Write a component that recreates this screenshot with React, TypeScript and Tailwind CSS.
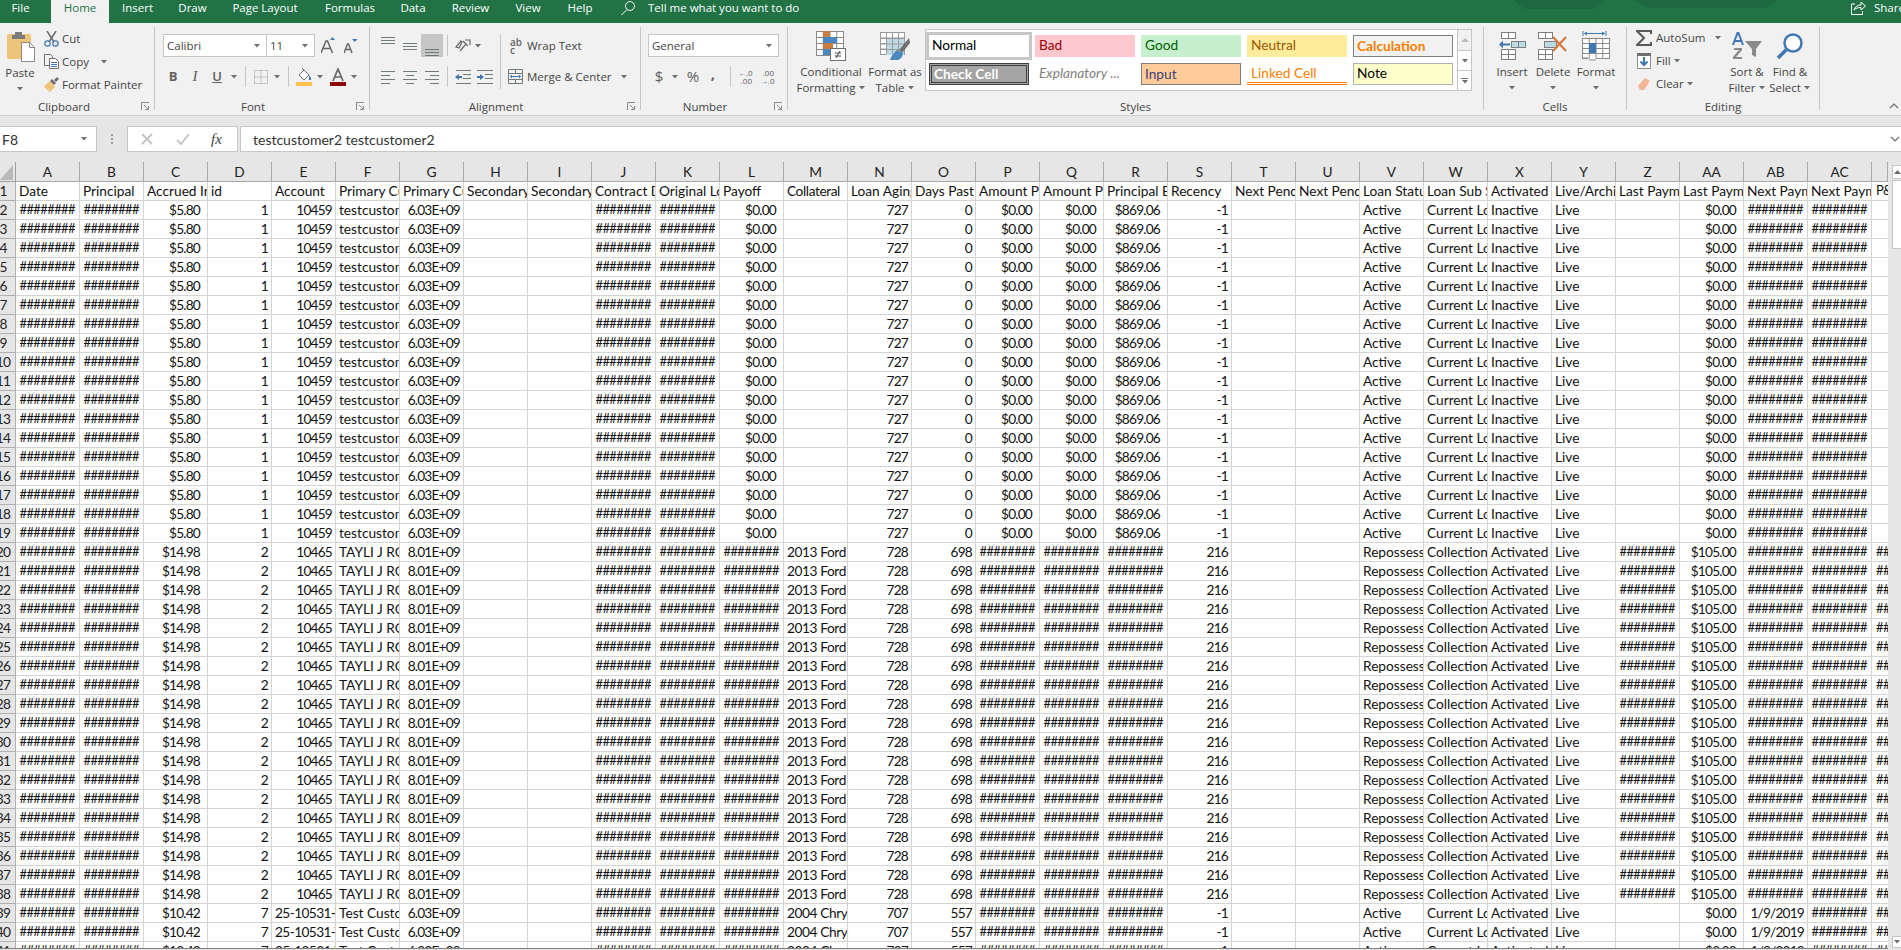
import type { ReactNode } from "react";

const COLS = ["A","B","C","D","E","F","G","H","I","J","K","L","M","N","O","P","Q","R","S","T","U","V","W","X","Y","Z","AA","AB","AC",""];

const HEADERS = ["Date","Principal","Accrued Interest","id","Account","Primary Customer","Primary Customer","Secondary Customer","Secondary Customer","Contract Date","Original Loan","Payoff","Collateral","Loan Aging","Days Past Due","Amount Past","Amount Past","Principal Balance","Recency","Next Pending","Next Pending","Loan Status","Loan Sub Status","Activated","Live/Archive","Last Payment","Last Payment","Next Payment","Next Payment","P&I"];

const H = "########";

// r = number, m = money, h = hashes, l = text
type Kind = "r" | "m" | "h" | "l";
const KINDS: Kind[] = ["h","h","m","r","r","l","r","l","l","h","h","m","l","r","r","m","m","m","r","l","l","l","l","l","l","h","m","h","h","l"];

function rowValues(n: number): string[] {
  if (n <= 19) return [H,H,"$5.80","1","10459","testcustomer2 testcustomer2","6.03E+09","","",H,H,"$0.00","","727","0","$0.00","$0.00","$869.06","-1","","","Active","Current Loan","Inactive","Live","","$0.00",H,H,""];
  if (n <= 38) return [H,H,"$14.98","2","10465","TAYLI J ROGERS","8.01E+09","","",H,H,H,"2013 Ford","728","698",H,H,H,"216","","","Repossessed","Collections","Activated","Live",H,"$105.00",H,H,H];
  return [H,H,"$10.42","7","25-10531-T","Test Customer","6.03E+09","","",H,H,H,"2004 Chrysler","707","557",H,H,H,"-1","","","Active","Current Loan","Activated","Live","","$0.00","1/9/2019",H,H];
}

const rows = Array.from({ length: 40 }, (_, i) => i + 2);

function cellClass(kind: Kind, value: string, col: number) {
  const base = "overflow-hidden whitespace-nowrap border-r border-b border-[#d4d4d4] leading-[17px] ";
  if (col === 29) return base + "border-r-0 pl-[4px] tracking-[-0.6px] text-[13px]";
  if (value === H) return base + "text-right pr-[4px] tracking-[-0.6px] text-[13px]";
  if (col === 27 && value.includes("/")) return base + "text-right pr-[3px] tracking-[-0.8px]";
  if (col === 12) return base + "pl-[3px] tracking-[-0.4px]";
  if (kind === "m") return base + "text-right pr-[7px] tracking-[-0.8px]";
  if (value.startsWith("25-")) return base + "pl-[3px] tracking-[-0.6px]";
  if (kind === "r") return base + "text-right pr-[3px] tracking-[-0.8px]";
  return base + "pl-[3px]";
}

function Caret({ className = "" }: { className?: string }) {
  return (
    <svg width="8" height="4" viewBox="0 0 8 4" className={className}>
      <path d="M1 0h6L4 3.5z" fill="#6f6f6f" />
    </svg>
  );
}

function Launcher() {
  return (
    <svg width="9" height="9" viewBox="0 0 9 9">
      <path d="M.5 8V.5H8M3 3l4 4M4 7.500h3.500V4" fill="none" stroke="#8a8a8a" />
    </svg>
  );
}

function Group({ width, label, launcher, labelClass = "", children }: { width: string; label: string; launcher?: boolean; labelClass?: string; children: ReactNode }) {
  return (
    <section className={`${width} flex h-[83px] shrink-0 flex-col border-r border-[#c6c6c6]`}>
      <div className="flex h-[76px] shrink-0">{children}</div>
      <div className="flex h-[7px] items-center leading-[14px] text-[#444]">
        <span className={`flex-1 text-center ${labelClass}`}>{label}</span>
        {launcher && (
          <span className="flex w-[18px] justify-center">
            <Launcher />
          </span>
        )}
      </div>
    </section>
  );
}

function BigButton({ width, icon, lines, caret }: { width: string; icon: ReactNode; lines: string[]; caret?: boolean }) {
  return (
    <div className={`${width} flex shrink-0 flex-col items-center pt-[4px] leading-[16px] text-[#444]`}>
      <div className="flex h-[30px] items-center">{icon}</div>
      <div className="mt-[3px] whitespace-nowrap">{lines[0]}</div>
      {lines[1] ? (
        <div className="flex items-center gap-[2px] whitespace-nowrap">
          {lines[1]}
          {caret && <Caret />}
        </div>
      ) : (
        <Caret className="mt-[6px]" />
      )}
    </div>
  );
}

function SmallRow({ icon, text, caretClass, iconWidth = "w-[18px]" }: { icon: ReactNode; text: string; caretClass?: string; iconWidth?: string }) {
  return (
    <div className="flex h-[23px] items-center whitespace-nowrap text-[#444]">
      <span className={`flex ${iconWidth} shrink-0`}>{icon}</span>
      {text}
      {caretClass && <Caret className={caretClass} />}
    </div>
  );
}

function Combo({ width, text }: { width: string; text: string }) {
  return (
    <div className={`${width} flex h-[23px] items-center justify-between border border-[#c6c6c6] bg-white pl-[3px] pr-[5px] text-[#444]`}>
      <span>{text}</span>
      <Caret />
    </div>
  );
}

function Sep() {
  return <div className="h-[21px] w-px shrink-0 bg-[#c6c6c6]" />;
}

function Lines({ rows: ys, kind = "left" }: { rows: number[]; kind?: "left" | "center" | "right" | "full" }) {
  const spec: Record<string, [number, number][]> = {
    left: [[0, 14], [0, 9], [0, 14], [0, 9]],
    center: [[0, 14], [3, 11], [0, 14], [3, 11]],
    right: [[0, 14], [5, 14], [0, 14], [5, 14]],
    full: [[0, 14], [0, 14], [0, 14], [0, 14]],
  };
  return (
    <svg width="14" height="14" viewBox="0 0 14 14">
      {ys.map((y, i) => (
        <path key={y} d={`M${spec[kind][i][0]} ${y + 0.5}H${spec[kind][i][1]}`} stroke="#6f7b78" />
      ))}
    </svg>
  );
}

const CellGrid = ({ x, y, w, h, cols, rws, stroke = "#7f7f7f" }: { x: number; y: number; w: number; h: number; cols: number; rws: number; stroke?: string }) => (
  <g fill="none" stroke={stroke}>
    <rect x={x + 0.5} y={y + 0.5} width={w} height={h} fill="#fff" />
    {Array.from({ length: cols - 1 }, (_, i) => (
      <path key={`c${i}`} d={`M${x + 0.5 + ((i + 1) * w) / cols} ${y}v${h}`} />
    ))}
    {Array.from({ length: rws - 1 }, (_, i) => (
      <path key={`r${i}`} d={`M${x} ${y + 0.5 + ((i + 1) * h) / rws}h${w}`} />
    ))}
  </g>
);

function Ribbon() {
  return (
    <div className="flex h-[93px] border-b border-[#d0d0d0] bg-[#f1f1f1] pt-[4px]">
      <Group width="w-[155px]" label="Clipboard" launcher labelClass="pr-[8px]">
        <div className="flex w-[40px] shrink-0 flex-col items-center leading-[16px] text-[#444]">
          <svg width="29" height="31" viewBox="0 0 29 31" className="ml-[2px] mt-[4px]">
            <rect x="0" y="3" width="24" height="25" rx="2" fill="#eec578" />
            <path d="M5 4h3V1h7v3h3v4H5z" fill="#7b7b7b" />
            <path d="M14.500 11.500h8l5 5v14h-13z" fill="#fff" stroke="#8a8a8a" />
            <path d="M22.500 11.500v5h5" fill="none" stroke="#8a8a8a" />
          </svg>
          <div className="mt-[3px]">Paste</div>
          <Caret className="mt-[6px]" />
        </div>
        <div className="ml-[4px] flex flex-col">
          <SmallRow
            text="Cut"
            icon={
              <svg width="15" height="16" viewBox="0 0 15 16">
                <path d="M3 0l7 11M12 0L5 11" stroke="#6f6f6f" strokeWidth="1.600" fill="none" />
                <circle cx="3.500" cy="12.500" r="2.700" fill="none" stroke="#3f78b5" strokeWidth="1.200" />
                <circle cx="11.500" cy="12.500" r="2.700" fill="none" stroke="#3f78b5" strokeWidth="1.200" />
              </svg>
            }
          />
          <SmallRow
            text="Copy"
            caretClass="ml-[11px]"
            icon={
              <svg width="15" height="15" viewBox="0 0 15 15" fill="none" stroke="#6f6f6f">
                <path d="M.5.500h6l2 2v9H.5z" fill="#f1f1f1" />
                <path d="M5.500 4.500h6l3 3v7h-9z" fill="#fff" />
                <path d="M7 8.500h6M7 10.500h6M7 12.500h6" stroke="#3f78b5" />
              </svg>
            }
          />
          <SmallRow
            text="Format Painter"
            icon={
              <svg width="16" height="15" viewBox="0 0 16 15">
                <path d="M0 9l6-5 5 6-5 5-2-1 1-2-2 1z" fill="#eec578" />
                <path d="M6 4l4 4 2-2-4-4zM10 3l3-3 2 2-3 3z" fill="#6f6f6f" />
              </svg>
            }
          />
        </div>
      </Group>

      <Group width="w-[215px]" label="Font" launcher>
        <div className="flex flex-col pl-[8px] pt-[7px]">
          <div className="flex items-center">
            <Combo width="w-[104px]" text="Calibri" />
            <Combo width="w-[49px] -ml-px" text="11" />
            <svg width="15" height="17" viewBox="0 0 15 17" className="ml-[6px]">
              <path d="M0 16L5 4h1.500l5 12M2 11.500h7.500" fill="none" stroke="#666" strokeWidth="1.500" />
              <path d="M9 3l2.500-3L14 3z" fill="#3f78b5" />
            </svg>
            <svg width="14" height="15" viewBox="0 0 14 15" className="ml-[8px] mt-[2px]">
              <path d="M0 14l3.500-9h1l3.500 9M1.500 10.500h5" fill="none" stroke="#666" strokeWidth="1.400" />
              <path d="M8 0h5.500l-2.700 3z" fill="#3f78b5" />
            </svg>
          </div>
          <div className="mt-[8px] flex h-[23px] items-center text-[#5f5f5f]">
            <span className="-ml-px w-[22px] text-center text-[13px] font-bold">B</span>
            <span className="w-[22px] text-center font-['Liberation_Serif',serif] text-[15px] italic">I</span>
            <span className="w-[22px] text-center text-[13px] font-semibold underline">U</span>
            <Caret className="ml-[2px]" />
            <div className="ml-[7px]"><Sep /></div>
            <svg width="14" height="14" viewBox="0 0 14 14" className="ml-[8px]">
              <path d="M.5.500h13v13H.5zM7 .500v13M.5 7h13" fill="none" stroke="#9a9a9a" strokeDasharray="1 1" />
            </svg>
            <Caret className="ml-[5px]" />
            <div className="ml-[7px]"><Sep /></div>
            <svg width="16" height="18" viewBox="0 0 16 18" className="ml-[7px]">
              <path d="M3 7l5-5 5 5-5 5z" fill="#fff" stroke="#6f6f6f" />
              <path d="M6 0l2 2" stroke="#6f6f6f" />
              <path d="M13 7l2 3v2h-2z" fill="#3f78b5" />
              <rect y="14" width="16" height="4" fill="#fdc14d" />
            </svg>
            <Caret className="ml-[4px]" />
            <svg width="16" height="18" viewBox="0 0 16 18" className="ml-[6px]">
              <path d="M3 13L8 1l5 12M5 9h6" fill="none" stroke="#666" strokeWidth="1.700" />
              <rect y="14" width="16" height="4" fill="#8f0a0a" />
            </svg>
            <Caret className="ml-[4px]" />
          </div>
        </div>
      </Group>

      <Group width="w-[271px]" label="Alignment" launcher>
        <div className="flex pl-[7px] pt-[7px]">
          <div className="flex w-[123px] flex-col">
            <div className="flex h-[23px] items-center">
              <span className="flex h-[23px] w-[22px] items-start justify-center pt-[3px]"><Lines rows={[0, 3, 6]} kind="full" /></span>
              <span className="flex h-[23px] w-[22px] items-center justify-center pt-[2px]"><Lines rows={[3, 6, 9]} kind="full" /></span>
              <span className="flex h-[23px] w-[22px] items-end justify-center bg-[#c6c6c6]"><Lines rows={[6, 9, 12]} kind="full" /></span>
              <div className="ml-[4px]"><Sep /></div>
              <svg width="16" height="16" viewBox="0 0 16 16" className="ml-[7px]">
                <path d="M1 9l5-6 1 1-3 6zM5 13l6-7M8 3l5 5M10 2h5v5" fill="none" stroke="#666" strokeWidth="1.200" />
              </svg>
              <Caret className="ml-[3px]" />
            </div>
            <div className="mt-[8px] flex h-[23px] items-center">
              <span className="flex w-[22px] justify-center"><Lines rows={[1, 5, 9, 13]} kind="left" /></span>
              <span className="flex w-[22px] justify-center"><Lines rows={[1, 5, 9, 13]} kind="center" /></span>
              <span className="flex w-[22px] justify-center"><Lines rows={[1, 5, 9, 13]} kind="right" /></span>
              <div className="ml-[4px]"><Sep /></div>
              <svg width="16" height="14" viewBox="0 0 16 14" className="ml-[7px]">
                <path d="M0 7l4-3v2h3v2H4v2z" fill="#3f78b5" />
                <path d="M1 .500h15M8 4.500h8M8 8.500h8M1 13.500h15" stroke="#6f7b78" />
              </svg>
              <svg width="16" height="14" viewBox="0 0 16 14" className="ml-[6px]">
                <path d="M7 7L3 4v2H0v2h3v2z" fill="#3f78b5" />
                <path d="M0 .500h16M8 4.500h8M8 8.500h8M0 13.500h16" stroke="#6f7b78" />
              </svg>
            </div>
          </div>
          <div className="h-[55px] w-px bg-[#c6c6c6]" />
          <div className="ml-[7px] flex flex-col">
            <div className="flex h-[23px] items-center whitespace-nowrap text-[#444]">
              <span className="mr-[5px] ml-[2px] flex h-[16px] w-[12px] flex-col text-[10px] font-semibold leading-[8px] text-[#666]">
                <span>ab</span>
                <span>c</span>
              </span>
              Wrap Text
            </div>
            <div className="mt-[8px] flex h-[23px] items-center whitespace-nowrap text-[#444]">
              <svg width="15" height="15" viewBox="0 0 15 15" className="mr-[4px]">
                <path d="M.5.500h14v14H.5zM.5 4.500h14M.5 10.500h14M7.500 .500v4M7.500 10.500v4" fill="none" stroke="#6f7b78" />
                <path d="M3 7.500h9" stroke="#3f78b5" />
                <path d="M2 7.500l2-2v4zM13 7.500l-2-2v4z" fill="#3f78b5" />
              </svg>
              Merge &amp; Center
              <Caret className="ml-[8px]" />
            </div>
          </div>
        </div>
      </Group>

      <Group width="w-[147px]" label="Number" launcher>
        <div className="flex flex-col pl-[7px] pt-[7px]">
          <Combo width="w-[131px]" text="General" />
          <div className="mt-[8px] flex h-[23px] items-center text-[#5f5f5f]">
            <span className="w-[22px] text-center text-[15px]">$</span>
            <Caret className="ml-px" />
            <span className="ml-[3px] w-[22px] text-center text-[15px]">%</span>
            <span className="w-[18px] -translate-y-[4px] text-center text-[15px] font-bold leading-[14px]">,</span>
            <div className="ml-[8px]"><Sep /></div>
            <span className="ml-[7px] flex w-[14px] flex-col text-right text-[8px] leading-[8px]">
              <span><b className="font-normal text-[#3f78b5]">←</b>.0</span>
              <span>.00</span>
            </span>
            <span className="ml-[8px] flex w-[14px] flex-col text-right text-[8px] leading-[8px]">
              <span>.00</span>
              <span><b className="font-normal text-[#3f78b5]">→</b>.0</span>
            </span>
          </div>
        </div>
      </Group>

      <Group width="w-[696px]" label="Styles">
        <div className="flex pl-[8px]">
          <BigButton
            width="w-[70px]"
            lines={["Conditional", "Formatting"]}
            caret
            icon={
              <svg width="30" height="30" viewBox="0 0 30 30">
                <CellGrid x={0} y={0} w={27} h={24} cols={4} rws={4} stroke="#8a8a8a" />
                <rect x="7" y="0" width="7" height="6" fill="#c97c3d" />
                <rect x="7" y="6" width="14" height="6" fill="#4a86c0" />
                <rect x="7" y="12" width="10" height="6" fill="#c97c3d" />
                <rect x="7" y="18" width="7" height="6" fill="#4a86c0" />
                <rect x="14.500" y="17.500" width="15" height="12" fill="#fff" stroke="#6f6f6f" />
                <path d="M19 22h6M19 25h6M24 20l-4 7" stroke="#444" fill="none" />
              </svg>
            }
          />
          <BigButton
            width="w-[58px]"
            lines={["Format as", "Table"]}
            caret
            icon={
              <svg width="30" height="28" viewBox="0 0 30 28">
                <CellGrid x={0} y={0} w={24} h={22} cols={4} rws={4} stroke="#9a9a9a" />
                <rect x="6" y="6" width="18" height="17" fill="#bcdbe5" />
                <path d="M6.500 0v22M12.500 0v22M18.500 0v22M0 6.500h24M0 12h24M0 17.500h24" stroke="#9a9a9a" fill="none" />
                <path d="M29 6l-10 12 3 3 8-10z" fill="#6f6f6f" />
                <path d="M17 18c-4 3-6 7-7 10h8c3-1 5-4 5-7z" fill="#4a86c0" />
              </svg>
            }
          />
          <div className="ml-px mt-[2px] flex h-[62px] w-[547px] border border-[#c6c6c6] bg-white">
            <div className="grid grid-cols-[100px_100px_100px_100px_100px] grid-rows-[22px_22px] gap-x-[6px] gap-y-[6px] pl-[3px] pt-[5px] font-['Lato',sans-serif] text-[13.700px] leading-[20px]">
              <div className="bg-white pl-[3px] text-black outline-[3px] outline-[#c6c6c6]">Normal</div>
              <div className="bg-[#ffc7ce] pl-[4px] text-[#9c0006]">Bad</div>
              <div className="bg-[#c6efce] pl-[4px] text-[#006100]">Good</div>
              <div className="bg-[#ffeb9c] pl-[4px] text-[#9c5700]">Neutral</div>
              <div className="border border-[#7f7f7f] bg-[#f2f2f2] pl-[3px] font-bold text-[#fa7d00]">Calculation</div>
              <div className="border-[3px] border-double border-[#3f3f3f] bg-[#a5a5a5] pl-[2px] leading-[16px] font-bold text-white">Check Cell</div>
              <div className="pl-[4px] italic text-[#7f7f7f]">Explanatory ...</div>
              <div className="border border-[#7f7f7f] bg-[#ffcc99] pl-[3px] text-[#3f3f76]">Input</div>
              <div className="border-b-[3px] border-double border-[#fa7d00] pl-[4px] text-[#fa7d00]">Linked Cell</div>
              <div className="border border-[#b2b2b2] bg-[#ffffcc] pl-[3px] leading-[18px] text-black">Note</div>
            </div>
            <div className="ml-auto flex w-[14px] flex-col border-l border-[#c6c6c6]">
              <div className="flex h-[21px] items-center justify-center border-b border-[#c6c6c6] bg-[#f1f1f1]">
                <svg width="8" height="4" viewBox="0 0 8 4"><path d="M4 0l4 4H0z" fill="#bbb" /></svg>
              </div>
              <div className="flex h-[20px] items-center justify-center border-b border-[#c6c6c6]">
                <Caret />
              </div>
              <div className="flex flex-1 flex-col items-center justify-center gap-px">
                <div className="h-px w-[7px] bg-[#6f6f6f]" />
                <Caret />
              </div>
            </div>
          </div>
        </div>
      </Group>

      <Group width="w-[143px]" label="Cells">
        <div className="flex pl-[7px]">
          <BigButton
            width="w-[42px]"
            lines={["Insert"]}
            icon={
              <svg width="27" height="28" viewBox="0 0 27 28">
                <CellGrid x={2} y={0} w={14} h={6} cols={2} rws={1} />
                <rect x="12.500" y="9.500" width="14" height="6" fill="#bcdbe5" stroke="#7f7f7f" />
                <path d="M19.500 9.500v6" stroke="#7f7f7f" />
                <path d="M3 12.500h8" stroke="#3f78b5" strokeWidth="2" />
                <path d="M0 12.500l4-4v8z" fill="#3f78b5" />
                <CellGrid x={2} y={17} w={14} h={10} cols={2} rws={2} />
              </svg>
            }
          />
          <BigButton
            width="w-[40px]"
            lines={["Delete"]}
            icon={
              <svg width="30" height="28" viewBox="0 0 30 28">
                <CellGrid x={0} y={0} w={14} h={6} cols={2} rws={1} />
                <rect x="6.500" y="9.500" width="12" height="6" fill="#bcdbe5" stroke="#7f7f7f" />
                <CellGrid x={0} y={17} w={14} h={10} cols={2} rws={2} />
                <path d="M15 5l13 14M28 5L15 19" stroke="#d9793a" strokeWidth="2.200" />
              </svg>
            }
          />
          <BigButton
            width="w-[46px]"
            lines={["Format"]}
            icon={
              <svg width="28" height="30" viewBox="0 0 28 30">
                <path d="M1 0v5M24 0v5M2 2.500h21" stroke="#3f78b5" fill="none" />
                <path d="M2 2.500l3-2v4zM23 2.500l-3-2v4z" fill="#3f78b5" />
                <CellGrid x={0} y={7} w={27} h={20} cols={4} rws={4} stroke="#8a8a8a" />
                <rect x="7" y="12" width="7" height="10" fill="#3f78b5" />
                <path d="M0 27h6l2 2h5l2-2" stroke="#8a8a8a" fill="#fff" />
              </svg>
            }
          />
        </div>
      </Group>

      <Group width="w-[193px]" label="Editing">
        <div className="flex pl-[9px]">
          <div className="flex w-[89px] shrink-0 flex-col">
            <div className="-mt-px">
              <SmallRow
                text="AutoSum"
                iconWidth="w-[20px]"
                caretClass="ml-[9px]"
                icon={
                  <svg width="16" height="16" viewBox="0 0 16 16">
                    <path d="M15 4V1H1l7 7-7 7h14v-3" fill="none" stroke="#595959" strokeWidth="2" />
                  </svg>
                }
              />
            </div>
            <SmallRow
              text="Fill"
              iconWidth="w-[20px]"
              caretClass="ml-[2px]"
              icon={
                <svg width="14" height="16" viewBox="0 0 14 16" className="ml-px">
                  <rect x=".5" y=".5" width="13" height="15" fill="#fff" stroke="#8a8a8a" />
                  <rect width="14" height="3" fill="#6f6f6f" />
                  <path d="M7 4v8M3.500 8.500L7 12l3.500-3.500" fill="none" stroke="#3f78b5" strokeWidth="2" />
                </svg>
              }
            />
            <SmallRow
              text="Clear"
              iconWidth="w-[20px]"
              caretClass="ml-[2px]"
              icon={
                <svg width="14" height="14" viewBox="0 0 14 14" className="ml-px">
                  <path d="M8 1l5 3-6 9H3L1 9z" fill="#f6b595" />
                </svg>
              }
            />
          </div>
          <BigButton
            width="w-[44px]"
            lines={["Sort &", "Filter"]}
            caret
            icon={
              <svg width="30" height="28" viewBox="0 0 30 28">
                <path d="M1 13L5.500 1h1L11 13M3 9h6" fill="none" stroke="#3f78b5" strokeWidth="2" />
                <path d="M2 16h8v2l-6 7h6v2H1v-2l6-7H2z" fill="#8a8a8a" />
                <path d="M13 9h17l-6 8v8l-4-2v-6z" fill="#8a8a8a" />
              </svg>
            }
          />
          <BigButton
            width="w-[42px]"
            lines={["Find &", "Select"]}
            caret
            icon={
              <svg width="28" height="28" viewBox="0 0 28 28">
                <circle cx="17" cy="11" r="8.500" fill="#fff" stroke="#3f78b5" strokeWidth="2.500" />
                <path d="M11 17L2 26" stroke="#3f78b5" strokeWidth="3.500" />
              </svg>
            }
          />
        </div>
      </Group>

      <div className="flex flex-1 items-end justify-end pb-[6px] pr-[2px]">
        <svg width="10" height="6" viewBox="0 0 10 6"><path d="M1 5l4-4 4 4" fill="none" stroke="#6f6f6f" strokeWidth="1.200" /></svg>
      </div>
    </div>
  );
}

function TitleTabs() {
  const tabs: [string, string][] = [["Insert","w-[57px]"],["Draw","w-[53px]"],["Page Layout","w-[92px]"],["Formulas","w-[78px]"],["Data","w-[48px]"],["Review","w-[67px]"],["View","w-[48px]"],["Help","w-[56px]"]];
  return (
    <header className="relative flex h-[23px] overflow-hidden bg-[#217346] leading-[16px] text-white">
      <svg className="absolute left-[1400px] top-0" width="420" height="12" viewBox="0 0 420 12">
        <path d="M113 0h90l-10 9H125zM233 0h144l-12 8H250z" fill="#1d6840" />
      </svg>
      <span className="ml-[6px] mr-[16px] w-[29px] shrink-0 text-center">File</span>
      <span className="h-[23px] w-[58px] shrink-0 bg-[#f1f1f1] text-center text-[#217346]">Home</span>
      {tabs.map(([name, width]) => (
        <span key={name} className={`${width} shrink-0 text-center`}>{name}</span>
      ))}
      <svg width="16" height="16" viewBox="0 0 16 16" className="ml-[12px] shrink-0">
        <circle cx="10" cy="6" r="4.500" fill="none" stroke="#fff" />
        <path d="M7 9.500L1.500 15" stroke="#fff" />
      </svg>
      <span className="ml-[12px] shrink-0 whitespace-nowrap">Tell me what you want to do</span>
      <svg width="15" height="14" viewBox="0 0 15 14" className="relative ml-auto mt-[1px] shrink-0">
        <path d="M4 3H.5v10.500h11V10" fill="none" stroke="#fff" />
        <path d="M3 9c1-3 3-5 7-5V1l4.500 4L10 9V6.500C7 6.500 5 7 3 9z" fill="none" stroke="#fff" />
      </svg>
      <span className="ml-[8px] w-[27px] shrink-0 whitespace-nowrap">Share</span>
    </header>
  );
}

function FormulaBar() {
  return (
    <div className="flex h-[46px] items-center bg-[#e6e6e6] pt-[10px] pb-[10px] font-['Lato',sans-serif] text-[14px]">
      <div className="flex h-[26px] w-[97px] items-center justify-between border border-l-0 border-[#c6c6c6] bg-white pl-[2px] pr-[8px] text-[#333]">
        F8
        <Caret />
      </div>
      <div className="flex w-[30px] flex-col items-center gap-[2px]">
        <span className="h-[2px] w-[2px] bg-[#9a9a9a]" />
        <span className="h-[2px] w-[2px] bg-[#9a9a9a]" />
        <span className="h-[2px] w-[2px] bg-[#9a9a9a]" />
      </div>
      <div className="flex h-[26px] w-[111px] items-center border border-[#c6c6c6] bg-white pl-[13px]">
        <svg width="12" height="12" viewBox="0 0 12 12"><path d="M1 1l10 10M11 1L1 11" stroke="#c2c2c2" strokeWidth="1.800" /></svg>
        <svg width="14" height="12" viewBox="0 0 14 12" className="ml-[23px]"><path d="M1 7l4 4 8-10" fill="none" stroke="#c2c2c2" strokeWidth="1.800" /></svg>
        <span className="ml-[21px] font-['Liberation_Serif',serif] text-[15px] italic text-[#444]">fx</span>
      </div>
      <div className="ml-[2px] flex h-[26px] flex-1 items-center justify-between border border-r-0 border-[#c6c6c6] bg-white pl-[12px] pr-[1px] text-[#333]">
        testcustomer2 testcustomer2
        <svg width="10" height="6" viewBox="0 0 10 6"><path d="M1 1l4 4 4-4" fill="none" stroke="#6f6f6f" strokeWidth="1.200" /></svg>
      </div>
    </div>
  );
}

function Sheet() {
  return (
    <div className="flex h-[788px] overflow-hidden bg-[#e6e6e6] font-['Lato',sans-serif] text-[13.700px] text-[#111]">
      <div className="h-[787px] w-[1888px] shrink-0 overflow-hidden border-b border-[#808080]">
        <div className="grid w-[1888px] grid-cols-[16px_repeat(29,64px)_16px] grid-rows-[20px_repeat(41,19px)]">
          <div className="flex items-end justify-start border-r border-b border-[#9f9f9f] pb-[1px]">
            <svg width="13" height="15" viewBox="0 0 13 15"><path d="M13 0v15H0z" fill="#b9b9b9" /></svg>
          </div>
          {COLS.map((c, i) => (
            <div key={i} className="border-r border-b border-[#a9a9a9] text-center leading-[19px] text-[#222]">{c}</div>
          ))}

          <div className="flex justify-start border-r border-b border-[#b0b0b0]">
            <span className="flex w-[6px] justify-center whitespace-nowrap leading-[17px] tracking-[-0.8px] text-[#222]">1</span>
          </div>
          {HEADERS.map((h, i) => (
            <div key={i} className={cellClass("l", h, i) + " bg-white pl-[3px]"}>{h}</div>
          ))}

          {rows.map((n) => {
            const vals = rowValues(n);
            return [
              <div key={`h${n}`} className="flex justify-start border-r border-b border-[#b0b0b0]">
                <span className="flex w-[6px] justify-center whitespace-nowrap leading-[17px] tracking-[-0.8px] text-[#222]">{n}</span>
              </div>,
              ...vals.map((v, i) => (
                <div key={`${n}-${i}`} className={`bg-white ${cellClass(KINDS[i], v, i)}`}>{v}</div>
              )),
            ];
          })}
        </div>
      </div>
      <div className="ml-[4px] flex h-[787px] w-[9px] flex-col pt-[3px]">
        <div className="flex h-[14px] items-center justify-center border border-r-0 border-[#c6c6c6] bg-white">
          <svg width="7" height="4" viewBox="0 0 7 4"><path d="M3.500 0L7 4H0z" fill="#6f6f6f" /></svg>
        </div>
        <div className="mt-px h-[69px] border border-r-0 border-[#c6c6c6] bg-white" />
        <div className="flex-1" />
        <div className="mb-px flex h-[12px] items-center justify-center border border-r-0 border-[#c6c6c6] bg-white">
          <Caret />
        </div>
      </div>
    </div>
  );
}

export default function App() {
  return (
    <div className="h-[950px] w-[1901px] overflow-hidden font-['Open_Sans',sans-serif] text-[11.500px]">
      <TitleTabs />
      <Ribbon />
      <FormulaBar />
      <Sheet />
    </div>
  );
}
